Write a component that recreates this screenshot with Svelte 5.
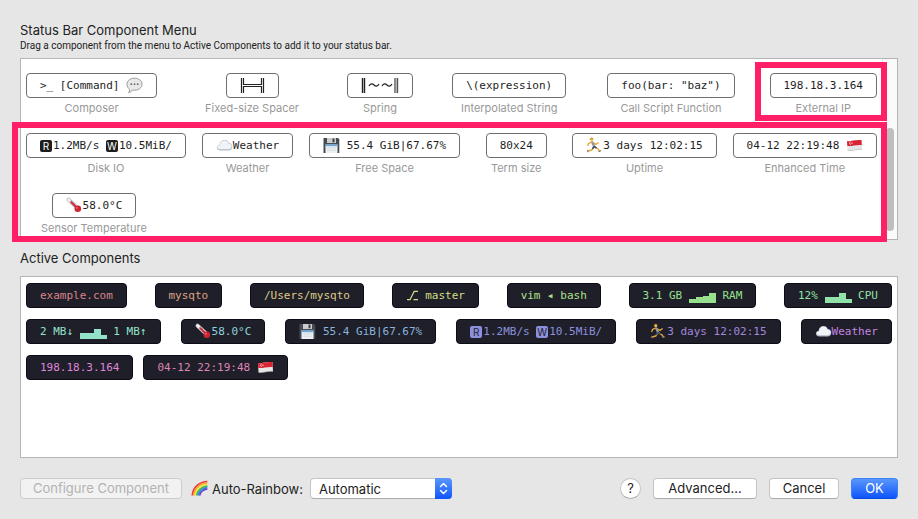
<script>
  const menuItems = [
    { label: 'Composer', parts: ['>_ [Command] ', { icon: 'bubble' }] },
    { label: 'Fixed-size Spacer', parts: [{ icon: 'spacer' }] },
    { label: 'Spring', parts: [{ icon: 'spring' }] },
    { label: 'Interpolated String', parts: ['\\(expression)'] },
    { label: 'Call Script Function', parts: ['foo(bar: "baz")'] },
    { label: 'External IP', parts: ['198.18.3.164'] },
    { label: 'Disk IO', parts: [{ key: 'R' }, '1.2MB/s ', { key: 'W' }, '10.5MiB/'] },
    { label: 'Weather', parts: [{ icon: 'cloud' }, 'Weather'] },
    { label: 'Free Space', parts: [{ icon: 'floppy' }, ' 55.4 GiB|67.67%'] },
    { label: 'Term size', parts: ['80x24'] },
    { label: 'Uptime', parts: [{ icon: 'runner' }, '3 days 12:02:15'] },
    { label: 'Enhanced Time', parts: ['04-12 22:19:48 ', { icon: 'flag' }] },
    { label: 'Sensor Temperature', parts: [{ icon: 'thermo' }, '58.0°C'] }
  ];

  const activeItems = [
    { ink: '#d98488', parts: ['example.com'] },
    { ink: '#dea384', parts: ['mysqto'] },
    { ink: '#dfcb88', parts: ['/Users/mysqto'] },
    { ink: '#d3de88', parts: [{ icon: 'branch' }, ' master'] },
    { ink: '#b0e08c', parts: ['vim ◂ bash'] },
    { ink: '#96e08e', parts: ['3.1 GB ', { spark: [4, 6, 7, 10] }, ' RAM'] },
    { ink: '#90e2a8', parts: ['12% ', { spark: [6, 6, 10, 4] }, ' CPU'] },
    { ink: '#92e3c8', parts: ['2 MB↓ ', { spark: [6, 6, 10, 4] }, ' 1 MB↑'] },
    { ink: '#8cd4de', parts: [{ icon: 'thermo' }, '58.0°C'] },
    { ink: '#88b4de', parts: [{ icon: 'floppy' }, ' 55.4 GiB|67.67%'] },
    { ink: '#8c90de', parts: [{ key: 'R' }, '1.2MB/s ', { key: 'W' }, '10.5MiB/'] },
    { ink: '#a488de', parts: [{ icon: 'runner' }, '3 days 12:02:15'] },
    { ink: '#c586e0', parts: [{ icon: 'cloud' }, 'Weather'] },
    { ink: '#df86db', parts: ['198.18.3.164'] },
    { ink: '#de86b4', parts: ['04-12 22:19:48 ', { icon: 'flag' }] }
  ];

  let rainbow = $state('Automatic');
</script>

{#snippet glyph(name)}
  {#if name === 'bubble'}
    <svg width="17" height="17" viewBox="0 0 17 17" aria-hidden="true">
      <path d="M8.5 1.2c4.3 0 7.5 2.5 7.5 6s-3.2 6-7.3 6c-.8 0-1.500-.1-2.200-.2-.9 1.400-2.200 2.300-3.900 2.600.8-.9 1.100-2 1-3.300C1.900 11.200 1 9.400 1 7.200c0-3.500 3.200-6 7.500-6z" fill="#e8e8e8" stroke="#9c9c9c" stroke-width="1" />
      <circle cx="5.300" cy="7.200" r=".9" fill="#666" /><circle cx="8.500" cy="7.200" r=".9" fill="#666" /><circle cx="11.700" cy="7.200" r=".9" fill="#666" />
    </svg>
  {:else if name === 'spacer'}
    <svg width="25" height="17" viewBox="0 0 25 17" stroke="#222" fill="none" stroke-width="1.200" aria-hidden="true">
      <path d="M1.500 1v15M3.500 1v6.500h18V1M3.500 16V9.500h18V16M23.500 1v15" />
    </svg>
  {:else if name === 'spring'}
    <svg width="38" height="17" viewBox="0 0 38 17" stroke="#222" fill="none" aria-hidden="true">
      <path d="M1.500 1v15M3.500 1v15" stroke-width="1.400" />
      <path d="M8 9c1.500-3 3.500-2.500 5-1s3.500 2 5-1M21 9c1.500-3 3.500-2.500 5-1s3.500 2 5-1" stroke-width="1.200" />
      <path d="M34 1v15M36.500 1v15" stroke="#555" stroke-width="1.400" /><path d="M35.300 1v15" stroke="#aaa" />
    </svg>
  {:else if name === 'cloud'}
    <svg width="17" height="17" viewBox="0 0 17 17" aria-hidden="true">
      <path d="M4.500 13.500C2.300 13.500 1 12.300 1 10.700c0-1.500 1-2.500 2.500-2.700C3.800 5 5.800 3 8.500 3c2.200 0 3.700 1.200 4.300 3 2 .1 3.500 1.600 3.500 3.700 0 2.300-1.500 3.800-3.900 3.800z" fill="#b0b9c5" />
      <path d="M4.500 12.200C2.500 12.200 1.500 11.500 1.500 10.300c0-1.200 1-1.900 2.400-2C4.200 5.400 6 3.500 8.500 3.500c2 0 3.400 1.100 3.900 2.900 2 0 3.300 1.200 3.300 2.900 0 1.900-1.300 2.900-3.300 2.900z" fill="#f0f3f7" />
    </svg>
  {:else if name === 'floppy'}
    <svg width="17" height="17" viewBox="0 0 17 17" aria-hidden="true">
      <path d="M.5 1h14.500l1.300 1.300V16H.5z" fill="#454b50" />
      <path d="M4 1h9v5H4z" fill="#c9cdd0" /><path d="M9.500 1.500h2v3.800h-2z" fill="#3c4145" />
      <path d="M2.500 7.500h12V16h-12z" fill="#edf1f4" /><path d="M2.500 7.500h12v1.700h-12z" fill="#68a8dc" />
      <path d="M4 11h9M4 13.200h9" stroke="#c9d0d5" stroke-width=".7" />
    </svg>
  {:else if name === 'runner'}
    <svg width="17" height="17" viewBox="0 0 17 17" fill="none" stroke-linecap="round" stroke-linejoin="round" aria-hidden="true">
      <path d="M5.500 5.200 2.600 6.300l-.8 2.200M7.700 6l2.300 1.400 2.300-1.600" stroke="#eaa52c" stroke-width="1.300" />
      <path d="m7.300 11-1.600 2-3.500 1M9.500 10.500l2.500 1.300 1.500 2.300" stroke="#eaa52c" stroke-width="1.400" />
      <path d="M6.400 5.400 8.200 9.400" stroke="#8f9aa3" stroke-width="2.400" />
      <path d="m8 9.800-1.200 1.500M8.500 9.800l1.600.9" stroke="#41536a" stroke-width="1.700" />
      <path d="M1.800 13.200v1.600M13 14.500l1.700-.7" stroke="#71767c" stroke-width="1.100" />
      <circle cx="5.700" cy="2.600" r="1.600" fill="#f5bd42" /><path d="M4.200 2.200C4.500.8 6.500.5 7.200 1.800" stroke="#94602c" stroke-width=".8" />
    </svg>
  {:else if name === 'flag'}
    <svg width="17" height="17" viewBox="0 0 17 17" aria-hidden="true">
      <path d="M1 4c4 .8 7-1.500 14.500-1l.5 9.300c-7-.4-10.500 2-14.500 1z" fill="#e6e6e6" />
      <path d="M1 4c4 .8 7-1.500 14.500-1l.3 5c-7-.4-10.500 1.800-14.500.9z" fill="#d92433" />
      <path d="M4.600 5c-1.300.4-1.300 2.400.1 2.700" fill="none" stroke="#fff" stroke-width=".8" /><circle cx="6" cy="6.200" r=".6" fill="#fff" />
      <path d="M1.500 13.300c4 1 7.500-1.400 14.500-1" fill="none" stroke="#b2b2b2" stroke-width=".7" />
    </svg>
  {:else if name === 'thermo'}
    <svg width="17" height="17" viewBox="0 0 17 17" stroke-linecap="round" fill="none" aria-hidden="true">
      <path d="M2.600 2.700 11.500 11" stroke="#b9b9bf" stroke-width="4" /><path d="M2.600 2.700 11.500 11" stroke="#f1f1f4" stroke-width="2.600" />
      <path d="m5.300 5.300 6.200 5.900" stroke="#cf2434" stroke-width="2" /><circle cx="11.800" cy="11.700" r="3.300" fill="#cd2433" />
      <circle cx="10.900" cy="10.900" r=".8" fill="#f27c83" /><path d="m5.500 3.500-1 1M7.300 5.200l-1 1M9 6.800l-1 1" stroke="#777" stroke-width=".6" />
    </svg>
  {:else if name === 'branch'}
    <svg width="13" height="17" viewBox="0 0 13 17" fill="none" stroke="currentColor" stroke-width="1.300" aria-hidden="true">
      <path d="M1 12.700h3L8.200 4.300H12M7.500 12.700H12" />
    </svg>
  {/if}
{/snippet}

{#snippet content(parts)}
  {#each parts as part}
    {#if typeof part === 'string'}<span class="text">{part}</span>
    {:else if part.key}<span class="key">{part.key}</span>
    {:else if part.spark}
      <svg width="27" height="17" viewBox="0 0 27 17" fill="currentColor" shape-rendering="crispEdges" aria-hidden="true">
        {#each part.spark as h, i}<rect x={i * 7 - (i > 2 ? 1 : 0)} y={16 - h} width="7" height={h} />{/each}
      </svg>
    {:else}{@render glyph(part.icon)}{/if}
  {/each}
{/snippet}

<main>
  <h2>Status Bar Component Menu</h2>
  <p>Drag a component from the menu to Active Components to add it to your status bar.</p>

  <div class="menu-frame">
    <section class="box menu" aria-label="Status Bar Component Menu">
      <ul class="flow catalogue">
        {#each menuItems as item}
          <li class="entry">
            <div class="chip">{@render content(item.parts)}</div>
            <div class="caption">{item.label}</div>
          </li>
        {/each}
      </ul>
      <div class="track"><div class="thumb"></div></div>
    </section>
    <div class="mark mark-single"></div>
    <div class="mark mark-group"></div>
  </div>

  <h2 class="second">Active Components</h2>
  <section class="box active" aria-label="Active Components">
    <ul class="flow">
      {#each activeItems as item}
        <li class="chip dark" style={`--ink: ${item.ink}`}>{@render content(item.parts)}</li>
      {/each}
    </ul>
  </section>

  <footer>
    <button class="btn configure" disabled>Configure Component</button>
    <label for="rainbow">
      <svg width="17" height="17" viewBox="0 0 17 17" fill="none" stroke-width="1.600" aria-hidden="true">
        <path d="M1.200 15.500C1.800 7.500 8 1.800 16.300 1.500" stroke="#ee3b35" />
        <path d="M2.700 15.500C3.300 8.500 9 3.400 16.300 3" stroke="#f89c2a" />
        <path d="M4.200 15.500C4.800 9.500 10 5 16.300 4.500" stroke="#f6e33c" />
        <path d="M5.700 15.500C6.300 10.500 11 6.600 16.300 6" stroke="#35b84a" />
        <path d="M7.200 15.500C7.800 11.500 12 8.200 16.300 7.500" stroke="#2b7df0" />
        <path d="M8.600 15.500C9.200 12.500 12.500 9.600 16.300 8.900" stroke="#6d3fd0" />
      </svg>
      Auto-Rainbow:
    </label>
    <div class="select">
      <select id="rainbow" bind:value={rainbow}>
        <option>Automatic</option>
        <option>Disabled</option>
      </select>
      <span class="arrows">
        <svg width="9" height="13" viewBox="0 0 9 13" fill="none" stroke="#fff" stroke-width="1.500" stroke-linecap="round" stroke-linejoin="round" aria-hidden="true">
          <path d="m1.500 4.500 3-3 3 3M1.500 8.500l3 3 3-3" />
        </svg>
      </span>
    </div>
    <div class="actions">
      <button class="btn help">?</button>
      <button class="btn advanced">Advanced...</button>
      <button class="btn cancel">Cancel</button>
      <button class="btn ok">OK</button>
    </div>
  </footer>
</main>

<style>
  :global(body) {
    background: #e6e6e6;
  }
  main {
    box-sizing: border-box;
    padding: 20px;
    font-family: Inter, 'Liberation Sans', sans-serif;
    font-size: 13px;
    color: #222;
  }
  h2 {
    margin: 0;
    font-size: 13px;
    font-weight: 400;
    line-height: 20px;
  }
  p {
    margin: 0 0 6px;
    font-family: Roboto, 'Liberation Sans', sans-serif;
    font-size: 10px;
    line-height: 12px;
  }
  .second {
    margin: 8px 0;
  }
  .box {
    box-sizing: border-box;
    border: 1px solid #b5b5b5;
    background: #fff;
  }
  .menu-frame {
    position: relative;
  }
  .menu {
    display: flex;
  }
  .active {
    min-height: 182px;
  }
  .flow {
    flex: 1;
    display: flex;
    flex-wrap: wrap;
    justify-content: space-between;
    gap: 11px 10px;
    margin: 0;
    padding: 6px 5px;
    list-style: none;
  }
  .flow::after {
    content: '';
    flex: 1;
  }
  .catalogue {
    row-gap: 15px;
    padding: 14px 5px 1px;
  }
  .entry {
    display: flex;
    flex-direction: column;
    align-items: center;
  }
  .chip {
    --ink: #1e1e1e;
    --paper: #fff;
    box-sizing: border-box;
    display: flex;
    align-items: center;
    height: 25px;
    padding: 0 13px;
    border: 1px solid #6f6f6f;
    border-radius: 4px;
    background: var(--paper);
    color: var(--ink);
    font-family: 'DejaVu Sans Mono', 'Liberation Mono', monospace;
    font-size: 11px;
    line-height: 23px;
  }
  .dark {
    --paper: #1f1f29;
    border-color: #0c0c16;
  }
  .text {
    white-space: pre;
  }
  .key {
    width: 12px;
    margin-right: 1px;
    border-radius: 2px;
    background: var(--ink);
    color: var(--paper);
    font-family: Inter, sans-serif;
    font-size: 10px;
    line-height: 12px;
    text-align: center;
  }
  .caption {
    padding: 0 15px;
    font-size: 11px;
    line-height: 20px;
    color: #999;
    white-space: nowrap;
  }
  .track {
    box-sizing: border-box;
    display: flex;
    flex-direction: column;
    justify-content: flex-end;
    width: 15px;
    padding: 8px 3px;
    border-left: 1px solid #e8e8e8;
    background: #fafafa;
  }
  .thumb {
    height: 63%;
    border-radius: 4px;
    background: #bebebe;
  }
  .mark {
    position: absolute;
    right: 11px;
    box-sizing: border-box;
    border: 6px solid #ff1f66;
    pointer-events: none;
  }
  .mark-single {
    top: 4px;
    width: 132px;
    height: 59px;
  }
  .mark-group {
    top: 64px;
    bottom: -2px;
    left: -8px;
  }
  footer {
    display: flex;
    align-items: center;
    margin-top: 20px;
  }
  .btn {
    box-sizing: border-box;
    height: 21px;
    padding: 0;
    border: 1px solid #c4c4c4;
    border-bottom-color: #acacac;
    border-radius: 4px;
    background: #fff;
    color: #222;
    font: inherit;
    line-height: 19px;
  }
  .configure {
    width: 162px;
    border-color: #cdcdcd;
    background: #f2f2f2;
    color: #b3b3b3;
  }
  label {
    display: flex;
    align-items: center;
    gap: 4px;
    margin: 0 7px 0 9px;
    white-space: nowrap;
  }
  .select {
    position: relative;
    width: 142px;
    height: 21px;
  }
  select {
    box-sizing: border-box;
    width: 100%;
    height: 21px;
    padding: 0 24px 0 8px;
    border: 1px solid #c4c4c4;
    border-bottom-color: #acacac;
    border-radius: 4px;
    appearance: none;
    background: #fff;
    color: #222;
    font: inherit;
  }
  .arrows {
    position: absolute;
    top: 0;
    right: 0;
    display: flex;
    align-items: center;
    justify-content: center;
    width: 17px;
    height: 21px;
    border-radius: 0 4px 4px 0;
    background: linear-gradient(#5a97fb, #0f55fb);
    pointer-events: none;
  }
  .actions {
    display: flex;
    gap: 12px;
    margin-left: auto;
  }
  .help {
    width: 21px;
    border-radius: 50%;
  }
  .advanced {
    width: 104px;
  }
  .cancel {
    width: 70px;
  }
  .ok {
    width: 47px;
    border-color: #3f83f8;
    border-bottom-color: #0a4be0;
    background: linear-gradient(#5a97fb, #0f55fb);
    color: #fff;
  }
</style>
